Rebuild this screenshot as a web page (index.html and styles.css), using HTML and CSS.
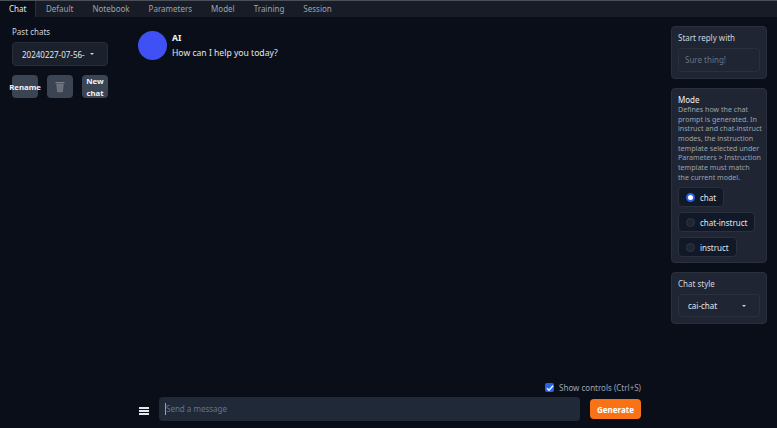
FILE: index.html
```html
<!DOCTYPE html>
<html lang="en">

<head>
  <meta charset="utf-8" />
  <title>Text generation web UI</title>
  <link rel="stylesheet" href="styles.css">
</head>

<body>
  <nav class="tabs">
    <a class="tab active">Chat</a>
    <a class="tab">Default</a>
    <a class="tab">Notebook</a>
    <a class="tab">Parameters</a>
    <a class="tab">Model</a>
    <a class="tab">Training</a>
    <a class="tab">Session</a>
  </nav>

  <div class="layout">
    <!-- Past chats -->
    <aside class="left">
      <div class="left-label">Past chats</div>
      <div class="select past-select">20240227-07-56-<span class="caret"></span></div>
      <div class="left-buttons">
        <button class="small-btn">Rename</button>
        <button class="small-btn trash">
          <svg width="10" height="12" viewBox="0 0 10 12">
            <path d="M0.5 1h9v1.2h-9z" fill="#7a818c" />
            <path d="M1.3 2.8h7.4l-.8 7.6c0 .5-.4.8-.9.8H3c-.5 0-.9-.3-.9-.8z" fill="#6f7682" />
            <path d="M3.2 4l.3 5.8M5 4v5.8M6.8 4l-.3 5.8" stroke="#5f6672" stroke-width=".6" />
          </svg>
        </button>
        <button class="small-btn">New chat</button>
      </div>
    </aside>

    <!-- Chat -->
    <main class="center">
      <div class="messages">
        <div class="message">
          <div class="avatar"></div>
          <div>
            <div class="sender">AI</div>
            <div class="text">How can I help you today?</div>
          </div>
        </div>
      </div>
      <label class="show-controls">
        <span class="checkbox">
          <svg width="8" height="8" viewBox="0 0 8 8">
            <path d="M1 4.3l2 1.9L7 1.8" fill="none" stroke="#fff" stroke-width="1.4" />
          </svg>
        </span>
        Show controls (Ctrl+S)
      </label>
      <div class="input-row">
        <div class="hamburger"><span></span><span></span><span></span></div>
        <div class="message-input"><span class="cursor"></span>Send a message</div>
        <button class="generate">Generate</button>
      </div>
    </main>

    <!-- Settings -->
    <aside class="right">
      <section class="panel">
        <div class="panel-title">Start reply with</div>
        <div class="reply-input">Sure thing!</div>
      </section>

      <section class="panel mode-panel">
        <div class="panel-title mode-title">Mode</div>
        <p class="mode-info">Defines how the chat<br>prompt is generated. In<br>instruct and chat-instruct<br>modes, the instruction<br>template selected under<br>Parameters &gt; Instruction<br>template must match<br>the current model.</p>
        <div class="radio-list">
          <div class="radio-item"><span class="radio checked"></span>chat</div>
          <div class="radio-item"><span class="radio"></span>chat-instruct</div>
          <div class="radio-item"><span class="radio"></span>instruct</div>
        </div>
      </section>

      <section class="panel">
        <div class="panel-title">Chat style</div>
        <div class="select style-select">cai-chat<span class="caret"></span></div>
      </section>
    </aside>
  </div>
</body>

</html>
```

FILE: styles.css
```css
/* Global Reset */
* {
  margin: 0;
  padding: 0;
  box-sizing: border-box;
}

html,
body {
  height: 100%;
  overflow: hidden;
}

body {
  font-family: 'Noto Sans', sans-serif;
  font-size: 8px;
  background-color: #0a0e18;
  color: #e5e7eb;
  display: flex;
  flex-direction: column;
}

/* Tabs */
.tabs {
  display: flex;
  height: 17px;
  background-color: #181c26;
  border-top: 1px solid #4b4f57;
}

.tab {
  padding: 0 9.5px;
  line-height: 16px;
  color: #9ca3af;
}

.tab:first-child {
  padding: 0 9px;
}

.tab.active {
  background-color: #0a0e18;
  color: #e5e7eb;
  border-right: 1px solid #2a2f3a;
}

/* Main layout */
.layout {
  flex: 1;
  display: flex;
}

.left {
  width: 120px;
  flex: none;
  padding: 9px 12px 0;
}

.left-label {
  line-height: 12px;
  margin-bottom: 4px;
  color: #d1d5db;
}

.select {
  display: flex;
  align-items: center;
  border: 1px solid #262c38;
  border-radius: 4px;
  background-color: #1a202c;
  color: #e5e7eb;
}

.past-select {
  height: 24px;
  width: 96px;
  padding-left: 9px;
}

.caret {
  width: 0;
  height: 0;
  margin-left: 5px;
  border-left: 2.5px solid transparent;
  border-right: 2.5px solid transparent;
  border-top: 2.5px solid #d1d5db;
}

.left-buttons {
  display: flex;
  gap: 9px;
  margin-top: 9px;
}

.small-btn {
  width: 26px;
  height: 23px;
  flex: none;
  display: flex;
  align-items: center;
  justify-content: center;
  border: none;
  border-radius: 4px;
  background-color: #3b4452;
  color: #f3f4f6;
  font-family: inherit;
  font-size: 7.8px;
  font-weight: 700;
  line-height: 12px;
  white-space: nowrap;
}

.small-btn:last-child {
  white-space: normal;
}

/* Chat column */
.center {
  flex: 1;
  display: flex;
  flex-direction: column;
  padding: 14px 30px 7px 18px;
  min-width: 0;
}

.messages {
  flex: 1;
}

.message {
  display: flex;
  gap: 5px;
}

.avatar {
  width: 29px;
  height: 29px;
  border-radius: 50%;
  background-color: #3f51f5;
}

.sender {
  font-weight: 700;
  font-size: 8.6px;
  line-height: 14px;
  color: #f3f4f6;
}

.text {
  font-size: 8.6px;
  line-height: 16px;
  color: #e5e7eb;
}

.show-controls {
  display: flex;
  align-items: center;
  justify-content: flex-end;
  gap: 5px;
  margin-bottom: 4px;
  color: #9ca3af;
}

.checkbox {
  display: flex;
  align-items: center;
  justify-content: center;
  width: 9px;
  height: 9px;
  border-radius: 2px;
  background-color: #2563eb;
}

.input-row {
  display: flex;
  align-items: center;
}

.hamburger {
  width: 10px;
  margin: 3px 10px 0 1px;
  display: flex;
  flex-direction: column;
  gap: 1px;
}

.hamburger span {
  height: 2px;
  background-color: #e5e7eb;
}

.message-input {
  flex: 1;
  height: 24px;
  display: flex;
  align-items: center;
  padding: 0 0 1px 6px;
  border-radius: 4px;
  background-color: #1f2937;
  color: #6b7280;
}

.cursor {
  width: 1px;
  height: 12px;
  background-color: #9ca3af;
}

.generate {
  width: 51px;
  height: 20px;
  margin-left: 10px;
  border: none;
  border-radius: 4px;
  background-color: #f97316;
  color: #fff;
  font-family: inherit;
  font-size: 8px;
  font-weight: 700;
}

/* Right panels */
.right {
  width: 106px;
  padding: 9px 10px 0 0;
  display: flex;
  flex-direction: column;
  gap: 9px;
  flex: none;
}

.panel {
  padding: 5px 6px 6px;
  border: 1px solid #2a303c;
  border-radius: 4px;
  background-color: #1f2533;
}

.panel-title {
  line-height: 12px;
  margin-bottom: 4px;
  color: #d1d5db;
}

.reply-input {
  height: 24px;
  padding-left: 6px;
  line-height: 22px;
  border: 1px solid #2a303c;
  border-radius: 4px;
  color: #6b7280;
}

.mode-panel {
  padding-bottom: 5px;
}

.mode-title {
  margin-bottom: -1px;
  color: #f3f4f6;
}

.mode-info {
  font-size: 7.1px;
  line-height: 9.65px;
  white-space: nowrap;
  color: #9ca3af;
}

.radio-list {
  margin-top: 5px;
  display: flex;
  flex-direction: column;
  align-items: flex-start;
  gap: 5px;
}

.radio-item {
  height: 20px;
  display: flex;
  align-items: center;
  gap: 5px;
  padding: 0 7px;
  border: 1px solid #2a303c;
  border-radius: 4px;
  background-color: #111827;
  white-space: nowrap;
  color: #e5e7eb;
}

.radio {
  width: 9px;
  height: 9px;
  border-radius: 50%;
  background-color: #1f2533;
  border: 1px solid #2f3643;
}

.radio.checked {
  border: 2.5px solid #2563eb;
  background-color: #fff;
}

.style-select {
  height: 23px;
  padding-left: 9px;
  justify-content: space-between;
  padding-right: 13px;
  background-color: transparent;
  border-color: #2a303c;
}
```
